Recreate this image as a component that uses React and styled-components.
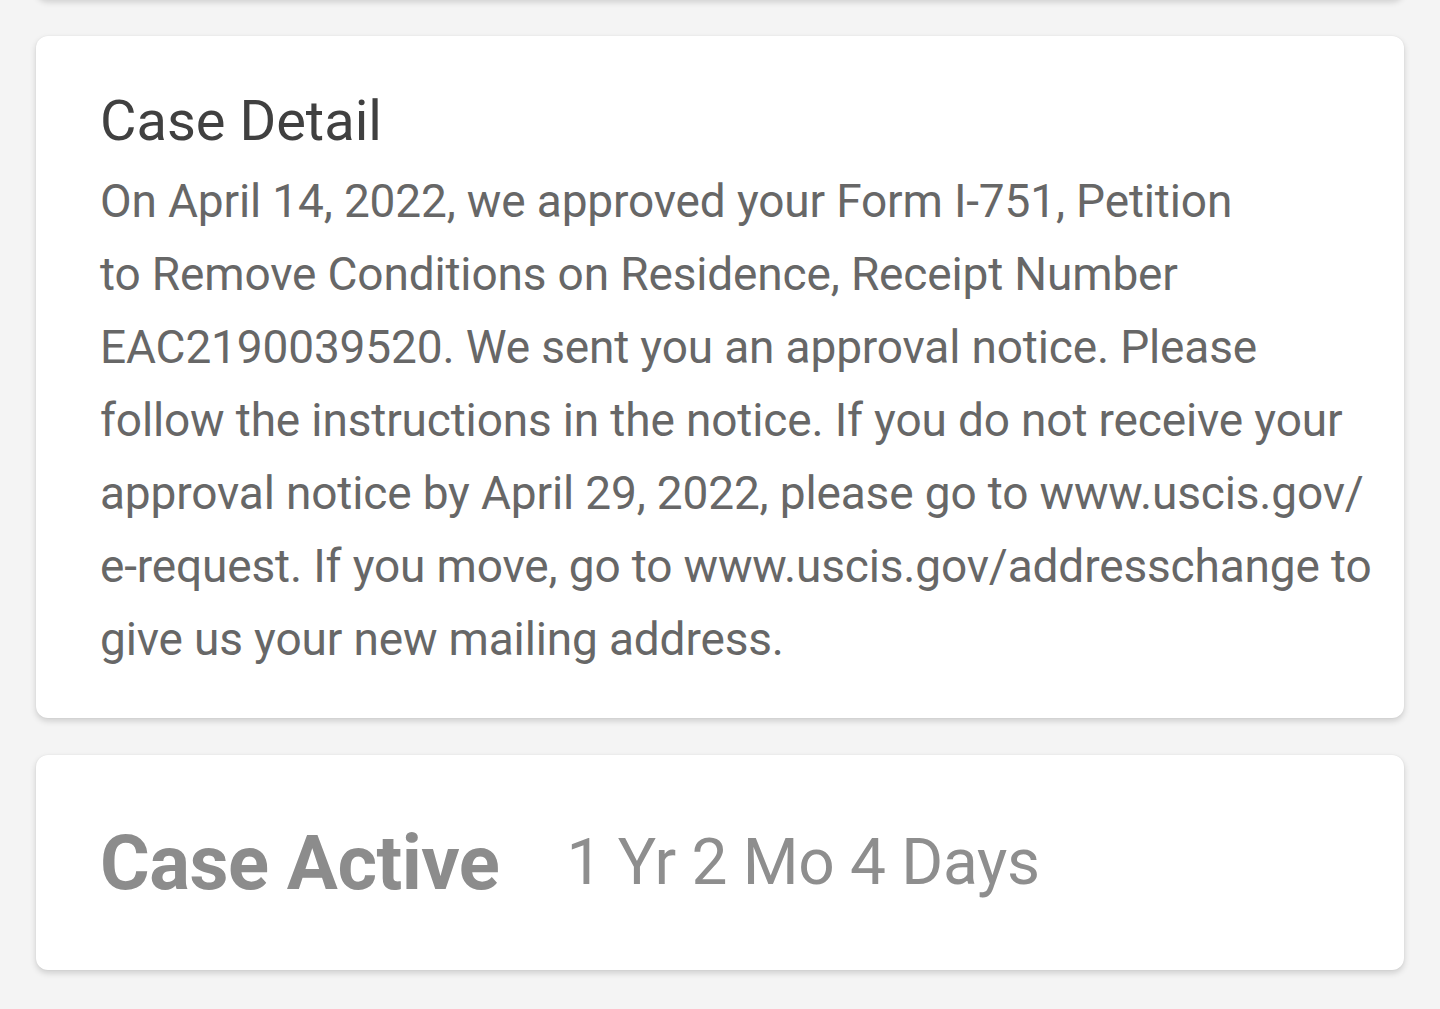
import React from "react";
import styled, { createGlobalStyle } from "styled-components";

const GlobalStyle = createGlobalStyle`
  html, body {
    margin: 0;
    padding: 0;
    background: #f4f4f4;
    font-family: Roboto, "Noto Sans", "Liberation Sans", sans-serif;
  }
`;

const Page = styled.div`
  min-height: 100vh;
  display: flex;
  flex-direction: column;
  gap: 37px;
  padding: 0 36px 40px;
  box-sizing: border-box;
  overflow: hidden;
`;

const Card = styled.div`
  background: #ffffff;
  border-radius: 12px;
  box-shadow: 0 3px 6px rgba(0, 0, 0, 0.16), 0 0 2px rgba(0, 0, 0, 0.06);
`;

const PrevCard = styled(Card)`
  height: 40px;
  margin-top: -41px;
  border-radius: 0 0 12px 12px;
`;

const DetailCard = styled(Card)`
  padding: 52px 64px 42px;
`;

const Title = styled.h2`
  margin: 0;
  font-size: 56px;
  font-weight: 400;
  line-height: 66px;
  color: #404040;
  letter-spacing: 0;
`;

const Body = styled.p`
  margin: 11px 0 0;
  font-size: 46px;
  line-height: 73px;
  color: #676767;
  letter-spacing: -0.15px;
  white-space: nowrap;
`;

const ActiveCard = styled(Card)`
  height: 215px;
  padding: 0 64px;
  display: flex;
  align-items: center;
  gap: 67px;
  box-sizing: border-box;
`;

const ActiveLabel = styled.span`
  font-size: 76px;
  font-weight: 700;
  color: #8c8c8c;
  letter-spacing: -0.5px;
`;

const ActiveValue = styled.span`
  font-size: 64px;
  font-weight: 400;
  color: #8e8e8e;
  letter-spacing: -0.3px;
`;

const lines = [
  "On April 14, 2022, we approved your Form I-751, Petition",
  "to Remove Conditions on Residence, Receipt Number",
  "EAC2190039520. We sent you an approval notice. Please",
  "follow the instructions in the notice. If you do not receive your",
  "approval notice by April 29, 2022, please go to www.uscis.gov/",
  "e-request. If you move, go to www.uscis.gov/addresschange to",
  "give us your new mailing address.",
];

export default function App() {
  return (
    <>
      <GlobalStyle />
      <Page>
        <PrevCard />
        <DetailCard>
          <Title>Case Detail</Title>
          <Body>
            {lines.map((l, i) => (
              <React.Fragment key={i}>
                {l}
                {i < lines.length - 1 && <br />}
              </React.Fragment>
            ))}
          </Body>
        </DetailCard>
        <ActiveCard>
          <ActiveLabel>Case Active</ActiveLabel>
          <ActiveValue>1 Yr 2 Mo 4 Days</ActiveValue>
        </ActiveCard>
      </Page>
    </>
  );
}
